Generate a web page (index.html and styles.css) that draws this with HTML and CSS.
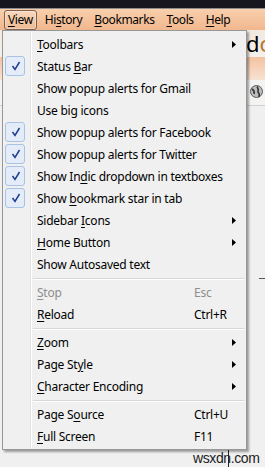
FILE: index.html
```html
<!DOCTYPE html>
<html lang="en">
<head>
    <meta charset="UTF-8">
    <meta name="viewport" content="width=device-width, initial-scale=1.0">
    <title>View menu</title>
    <link rel="stylesheet" href="styles.css">
</head>
<body>
    <div class="screen">
        <div class="titlebar"></div>
        <div class="menubar">
            <span class="top open"><u>V</u>iew</span>
            <span class="top">Hi<u>s</u>tory</span>
            <span class="top"><u>B</u>ookmarks</span>
            <span class="top"><u>T</u>ools</span>
            <span class="top"><u>H</u>elp</span>
        </div>

        <!-- page behind the menu, only the right edge shows -->
        <div class="page">
            <div class="tabstrip"><span class="tabtext">d<span class="o">o</span>i</span></div>
            <div class="toolbar"></div>
            <div class="navbar">
                <svg class="globe" width="13" height="13" viewBox="0 0 13 13">
                    <circle cx="6.5" cy="6.5" r="6" fill="#bdbdbd" stroke="#5a5a5a"/>
                    <path d="M2 4 Q5 6 4 9 M7 1.5 Q9 4 8 7 Q10 9 9 12" stroke="#333" stroke-width="1.6" fill="none"/>
                </svg>
            </div>
            <div class="content">
                <span class="dash"></span>
            </div>
        </div>

        <ul class="menu">
            <li class="item has-sub">
                <span class="gutter"></span>
                <span class="label"><u>T</u>oolbars</span>
                <span class="key"></span>
                <span class="arrow"><svg width="4" height="7" viewBox="0 0 4 7"><polygon points="0,0 4,3.5 0,7"/></svg></span>
            </li>
            <li class="item">
                <span class="gutter"><span class="check"><svg width="20" height="20" viewBox="0 0 20 20"><path d="M7.5 10 L10 13.5 L14.5 6"/></svg></span></span>
                <span class="label">Status <u>B</u>ar</span>
                <span class="key"></span><span class="arrow"></span>
            </li>
            <li class="item">
                <span class="gutter"></span>
                <span class="label">Show popup alerts for Gmail</span>
                <span class="key"></span><span class="arrow"></span>
            </li>
            <li class="item">
                <span class="gutter"></span>
                <span class="label">Use big icons</span>
                <span class="key"></span><span class="arrow"></span>
            </li>
            <li class="item">
                <span class="gutter"><span class="check"><svg width="20" height="20" viewBox="0 0 20 20"><path d="M7.5 10 L10 13.5 L14.5 6"/></svg></span></span>
                <span class="label">Show popup alerts for Facebook</span>
                <span class="key"></span><span class="arrow"></span>
            </li>
            <li class="item">
                <span class="gutter"><span class="check"><svg width="20" height="20" viewBox="0 0 20 20"><path d="M7.5 10 L10 13.5 L14.5 6"/></svg></span></span>
                <span class="label">Show popup alerts for Twitter</span>
                <span class="key"></span><span class="arrow"></span>
            </li>
            <li class="item">
                <span class="gutter"><span class="check"><svg width="20" height="20" viewBox="0 0 20 20"><path d="M7.5 10 L10 13.5 L14.5 6"/></svg></span></span>
                <span class="label">Show In<u>d</u>ic dropdown in textboxes</span>
                <span class="key"></span><span class="arrow"></span>
            </li>
            <li class="item">
                <span class="gutter"><span class="check"><svg width="20" height="20" viewBox="0 0 20 20"><path d="M7.5 10 L10 13.5 L14.5 6"/></svg></span></span>
                <span class="label">Show <u>b</u>ookmark star in tab</span>
                <span class="key"></span><span class="arrow"></span>
            </li>
            <li class="item has-sub">
                <span class="gutter"></span>
                <span class="label">Sidebar <u>I</u>cons</span>
                <span class="key"></span>
                <span class="arrow"><svg width="4" height="7" viewBox="0 0 4 7"><polygon points="0,0 4,3.5 0,7"/></svg></span>
            </li>
            <li class="item has-sub">
                <span class="gutter"></span>
                <span class="label"><u>H</u>ome Button</span>
                <span class="key"></span>
                <span class="arrow"><svg width="4" height="7" viewBox="0 0 4 7"><polygon points="0,0 4,3.5 0,7"/></svg></span>
            </li>
            <li class="item">
                <span class="gutter"></span>
                <span class="label">Show Autosaved text</span>
                <span class="key"></span><span class="arrow"></span>
            </li>
            <li class="sep"></li>
            <li class="item disabled">
                <span class="gutter"></span>
                <span class="label"><u>S</u>top</span>
                <span class="key">Esc</span><span class="arrow"></span>
            </li>
            <li class="item">
                <span class="gutter"></span>
                <span class="label"><u>R</u>eload</span>
                <span class="key">Ctrl+R</span><span class="arrow"></span>
            </li>
            <li class="sep"></li>
            <li class="item has-sub">
                <span class="gutter"></span>
                <span class="label"><u>Z</u>oom</span>
                <span class="key"></span>
                <span class="arrow"><svg width="4" height="7" viewBox="0 0 4 7"><polygon points="0,0 4,3.5 0,7"/></svg></span>
            </li>
            <li class="item has-sub">
                <span class="gutter"></span>
                <span class="label">Page St<u>y</u>le</span>
                <span class="key"></span>
                <span class="arrow"><svg width="4" height="7" viewBox="0 0 4 7"><polygon points="0,0 4,3.5 0,7"/></svg></span>
            </li>
            <li class="item has-sub">
                <span class="gutter"></span>
                <span class="label"><u>C</u>haracter Encoding</span>
                <span class="key"></span>
                <span class="arrow"><svg width="4" height="7" viewBox="0 0 4 7"><polygon points="0,0 4,3.5 0,7"/></svg></span>
            </li>
            <li class="sep"></li>
            <li class="item">
                <span class="gutter"></span>
                <span class="label">Page S<u>o</u>urce</span>
                <span class="key">Ctrl+U</span><span class="arrow"></span>
            </li>
            <li class="item">
                <span class="gutter"></span>
                <span class="label"><u>F</u>ull Screen</span>
                <span class="key">F11</span><span class="arrow"></span>
            </li>
        </ul>

        <div class="watermark">wsxdn.com</div>
    </div>
</body>
</html>
```

FILE: styles.css
```css
body {
    margin: 0;
    background: #fff;
    font-family: "Noto Sans", "Open Sans", sans-serif;
    font-size: 12px;
    letter-spacing: -0.25px;
    color: #000;
}
.screen {
    position: relative;
    width: 265px;
    height: 467px;
    overflow: hidden;
}
u {
    text-underline-offset: 2px;
}

/* window chrome */
.titlebar {
    height: 8px;
    background: #17161f;
    border-bottom: 1px solid #8d8d8d;
}
.menubar {
    display: flex;
    align-items: center;
    gap: 4px;
    height: 21px;
    padding-left: 4px;
    letter-spacing: -0.4px;
    background: linear-gradient(#f8cfad, #f1b78d);
}
.top {
    padding: 1px 3px 2px;
    border: 1px solid transparent;
    border-radius: 3px;
    line-height: 15px;
}
.top.open {
    border-color: #7e624f;
    background: linear-gradient(#f9d8bd, #edba94);
    box-shadow: inset 0 0 0 1px rgba(255,255,255,0.3);
}

/* page content behind */
.page {
    height: 438px;
    background: #f2f2f2;
}
.tabstrip {
    height: 27px;
    padding-left: 246px;
    background: linear-gradient(#f1e9e1, #f4f0ec);
    overflow: hidden;
    white-space: nowrap;
}
.tabtext {
    font-size: 22px;
    line-height: 26px;
    letter-spacing: 0;
}
.tabtext .o {
    color: #b9742c;
}
.toolbar {
    height: 23px;
    background: linear-gradient(#f2c3a0, #f8e2d2);
}
.navbar {
    height: 26px;
    padding: 5px 0 0 250px;
    box-sizing: border-box;
    background: #f4f3f2;
    border-bottom: 1px solid #d0d0d0;
}
.content {
    height: 361px;
    background: #f0f0f0;
    padding-top: 172px;
    padding-left: 259px;
    box-sizing: border-box;
}
.dash {
    display: block;
    width: 6px;
    height: 1px;
    background: #555;
}

/* the dropdown */
.menu {
    position: absolute;
    top: 30px;
    left: 2px;
    width: 245px;
    box-sizing: border-box;
    margin: 0;
    padding: 2px;
    list-style: none;
    border: 1px solid #979797;
    background:
        linear-gradient(to right, transparent 27px, #e2e3e3 27px, #e2e3e3 28px, #fff 28px, #fff 29px, transparent 29px),
        #f0f0f0;
    box-shadow: 2px 2px 2px rgba(0,0,0,0.35);
}
.item {
    display: grid;
    grid-template-columns: 32px 1fr 36px 14px;
    align-items: center;
    height: 22px;
}
.gutter {
    display: flex;
    align-items: center;
    height: 22px;
}
.check {
    display: block;
    width: 20px;
    height: 20px;
    box-sizing: border-box;
    border: 1px solid #a8c3e4;
    border-radius: 3px;
    background: #e3ecf8;
}
.check svg {
    display: block;
    margin: -1px;
}
.check path {
    fill: none;
    stroke: #1f3c8f;
    stroke-width: 1.5;
}
.label {
    white-space: nowrap;
}
.key {
    white-space: nowrap;
}
.arrow svg {
    display: block;
    margin-left: 2px;
}
.disabled {
    color: #8e8e8e;
}
.sep {
    height: 6px;
    margin-left: 28px;
    background: linear-gradient(transparent 3px, #d7d7d7 3px, #d7d7d7 4px, #fff 4px, #fff 5px, transparent 5px);
}

.watermark {
    position: absolute;
    left: 193px;
    top: 450px;
    font-family: "Liberation Sans", Arial, sans-serif;
    font-size: 14px;
    color: #222;
    letter-spacing: -0.4px;
}
.watermark::after {
    content: "";
    position: absolute;
    left: 35px;
    top: 0;
    width: 1px;
    height: 18px;
    background: #222;
}
```
